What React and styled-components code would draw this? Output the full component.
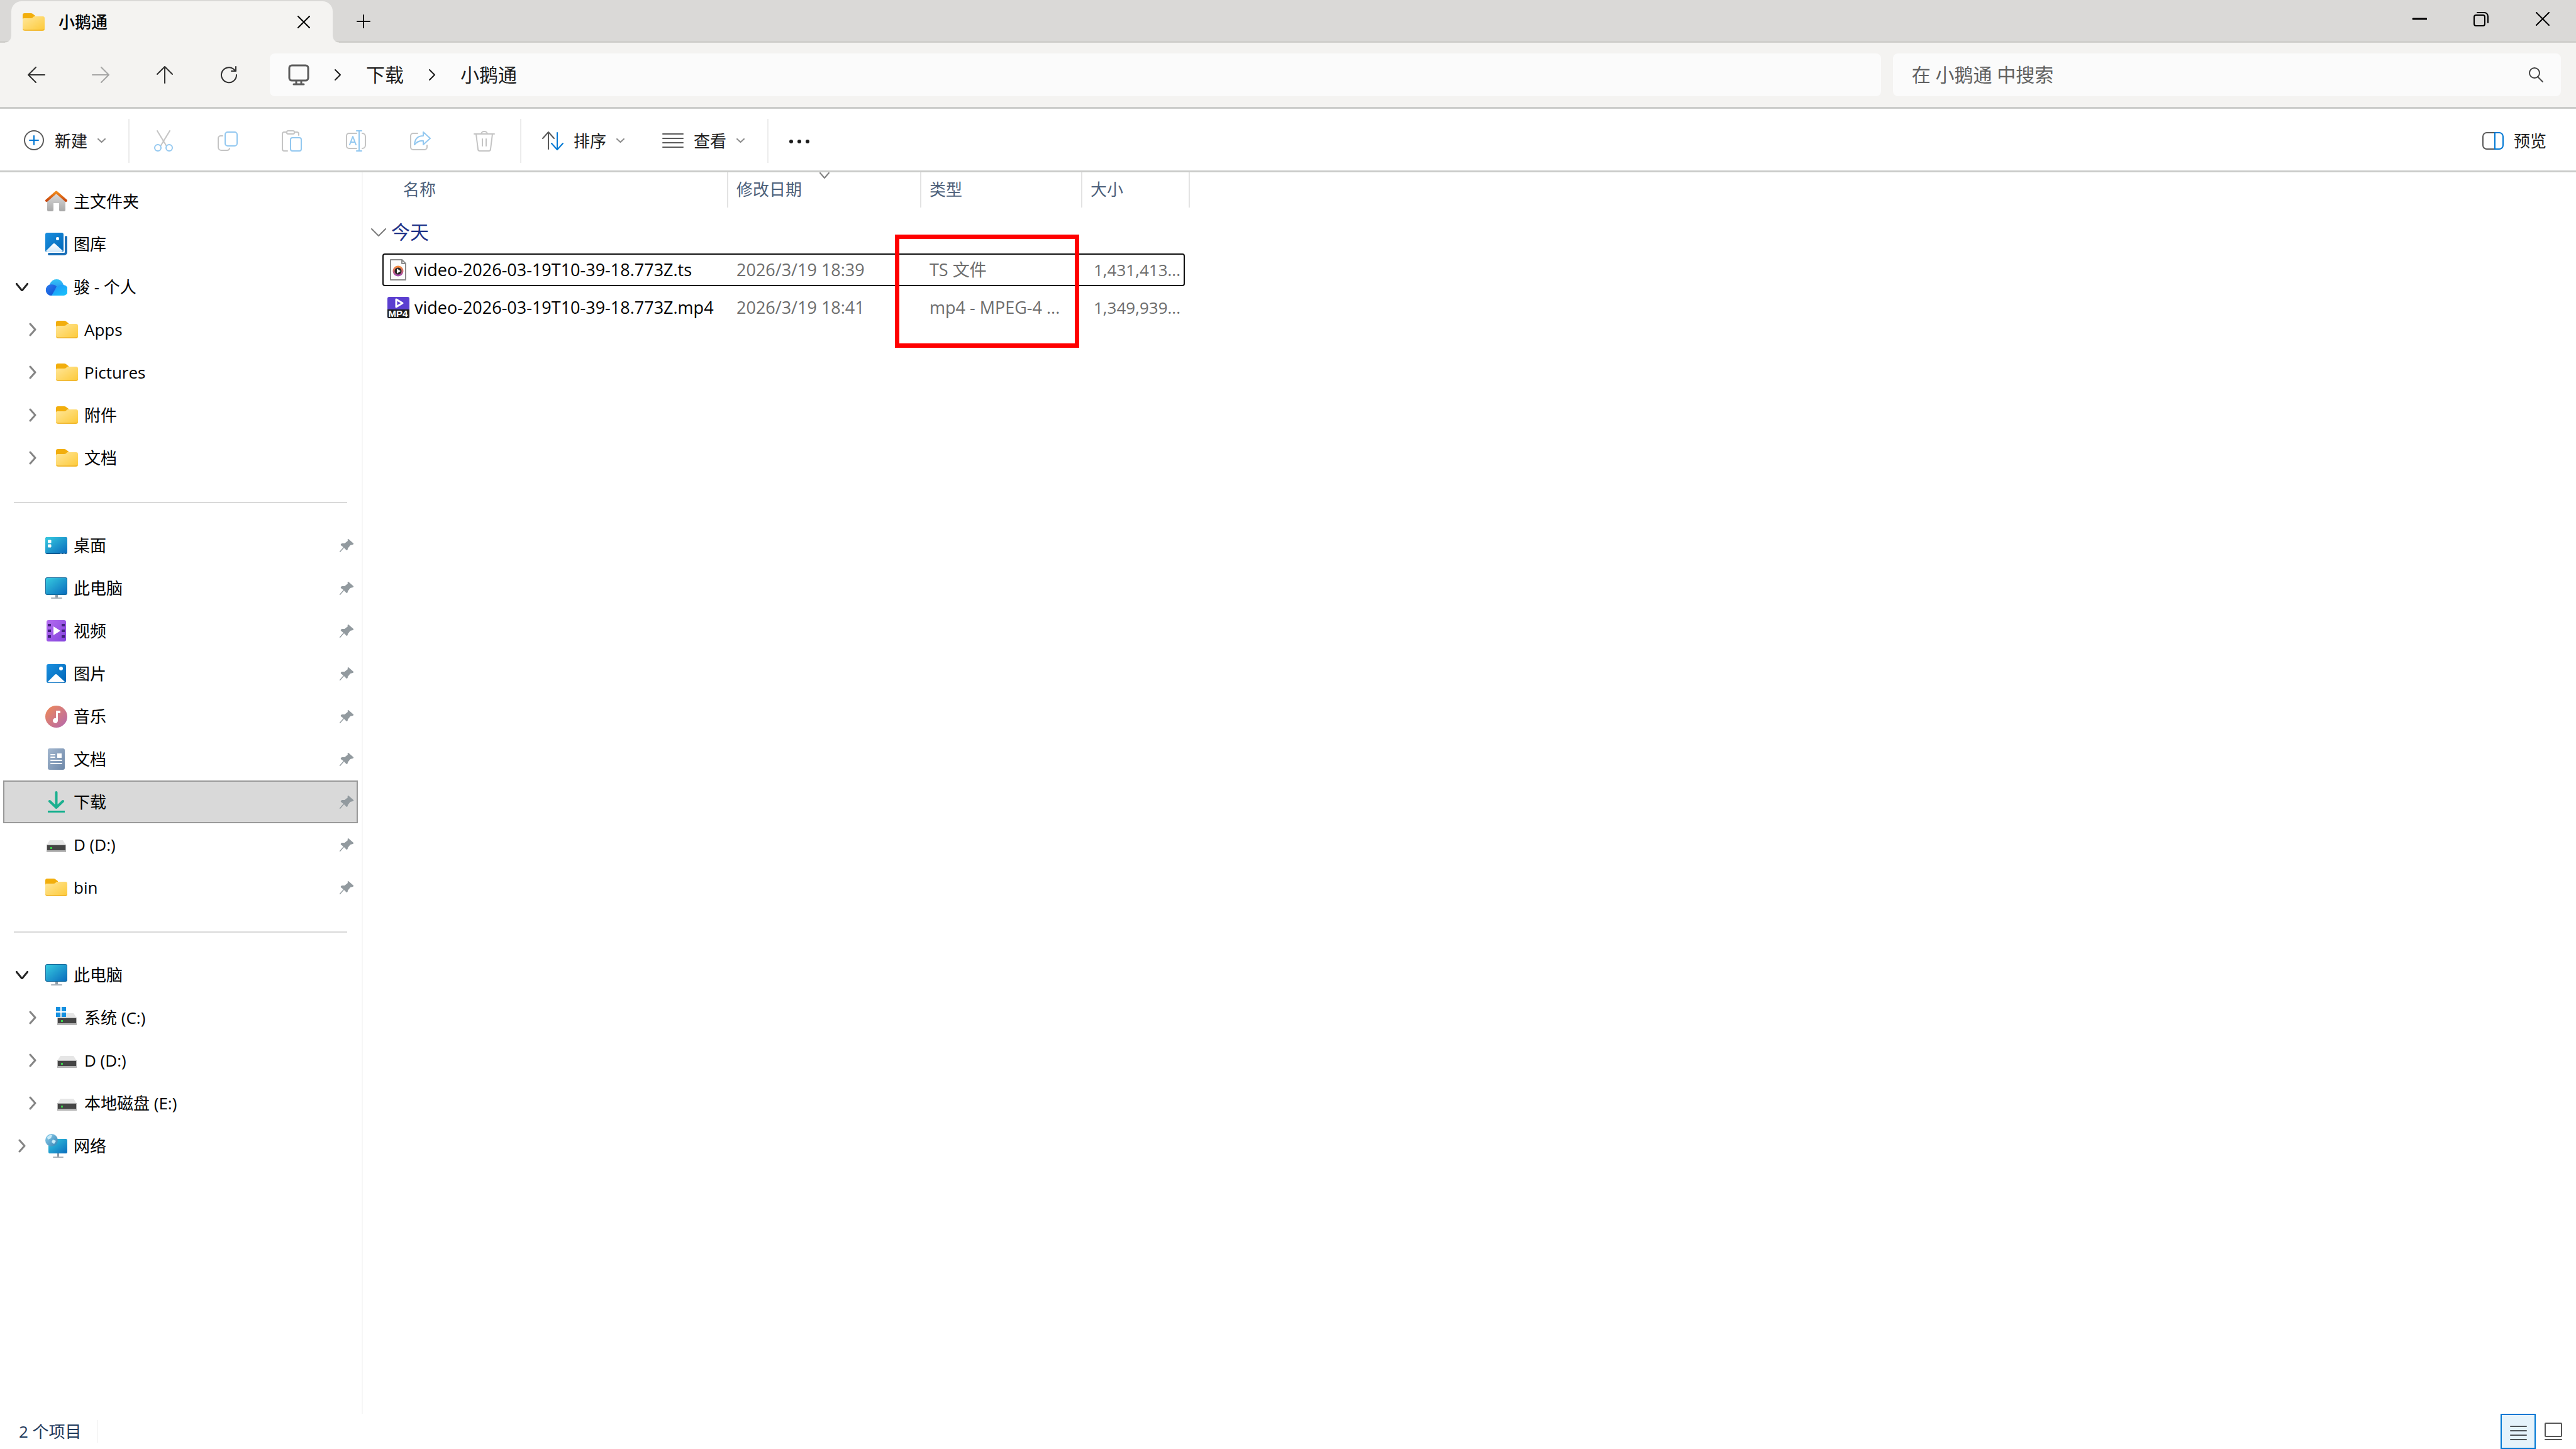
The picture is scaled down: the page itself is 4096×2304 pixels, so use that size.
import React, { useState } from 'react';
import styled, { createGlobalStyle, css } from 'styled-components';

const GlobalStyle = createGlobalStyle`
  * {
    box-sizing: border-box;
  }
  body {
    margin: 0;
    background: #ffffff;
    color: #000000;
    font-family: "Open Sans", "Noto Sans CJK SC", sans-serif;
    font-size: 26px;
    line-height: 36px;
  }
  button, input {
    font: inherit;
    color: inherit;
    border: 0;
    padding: 0;
    background: none;
  }
`;

const Window = styled.div`
  display: flex;
  flex-direction: column;
  min-height: 100vh;
`;

/* title bar */

const TitleBar = styled.header`
  display: flex;
  height: 68px;
  padding: 0 4px 0 18px;
  background: #dad9d7;
  box-shadow: inset 0 -3px 0 #d0cfcc;
`;

const Tab = styled.div`
  position: relative;
  display: flex;
  align-items: center;
  gap: 22px;
  width: 511px;
  padding: 0 36px 0 18px;
  margin-top: 2px;
  border-radius: 16px 16px 0 0;
  background: #f4f3f1;

  &::before, &::after {
    content: "";
    position: absolute;
    bottom: 0;
    width: 10px;
    height: 10px;
  }
  &::before {
    left: -10px;
    background: radial-gradient(circle at 0 0, transparent 9px, #f4f3f1 10px);
  }
  &::after {
    right: -10px;
    background: radial-gradient(circle at 100% 0, transparent 9px, #f4f3f1 10px);
  }
`;

const TabTitle = styled.span`
  flex: 1;
  font-weight: 500;
`;

const PlainButton = styled.button`
  display: flex;
  align-items: center;
  justify-content: center;
`;

const NewTabButton = styled(PlainButton)`
  margin-left: 38px;
`;

const WindowControls = styled.div`
  display: flex;
  margin-left: auto;
`;

const WindowButton = styled(PlainButton)`
  width: 98px;
  height: 60px;
`;

/* navigation bar */

const NavBar = styled.nav`
  display: flex;
  align-items: center;
  height: 105px;
  padding: 0 24px 0 7px;
  background: #f4f3f1;
  border-bottom: 3px solid #cbccca;
`;

const NavButton = styled(PlainButton)`
  width: 102px;
  height: 68px;
  color: ${(props) => (props.disabled ? '#a6a6a5' : '#303030')};
`;

const AddressBar = styled.div`
  display: flex;
  align-items: center;
  flex: 2532 1 0;
  gap: 39px;
  height: 68px;
  margin: 0 19px 0 14px;
  padding-left: 29px;
  border-radius: 8px;
  background: #fbfbfb;
  color: #1b1b1b;
  font-size: 30px;
`;

const Crumb = styled.a`
  color: inherit;
  text-decoration: none;
`;

const SearchBox = styled.label`
  display: flex;
  align-items: center;
  flex: 1004 1 0;
  height: 68px;
  padding: 0 28px 0 30px;
  border-radius: 8px;
  background: #fbfbfb;
  color: #454545;
  font-size: 30px;
`;

const SearchInput = styled.input`
  flex: 1;
  min-width: 0;
  outline: 0;

  &::placeholder {
    color: #606060;
    opacity: 1;
  }
`;

/* command bar */

const CommandBar = styled.div`
  display: flex;
  align-items: center;
  height: 101px;
  padding: 3px 17px 0 7px;
  border-bottom: 3px solid #cbccca;
`;

const CommandButton = styled.button`
  display: flex;
  align-items: center;
  gap: 16px;
  height: 68px;
  padding: 0 30px;
  color: #1b1b1b;
`;

const PreviewButton = styled(CommandButton)`
  margin-left: auto;
`;

const ToolButton = styled(PlainButton)`
  width: 102px;
  height: 68px;
`;

const Divider = styled.span`
  width: 2px;
  height: 70px;
  margin: 0 3px 0 6px;
  background: #ececec;
`;

/* body */

const Body = styled.div`
  display: flex;
  flex: 1;
`;

const Sidebar = styled.aside`
  width: 577px;
  padding: 12px 6px 0 5px;
  border-right: 2px solid #f6f6f6;
`;

const Tree = styled.ul`
  margin: 0;
  padding: 0;
  list-style: none;
`;

const Separator = styled.hr`
  height: 2px;
  margin: 36px 17px 33px;
  border: 0;
  background: #d9d9d9;
`;

const TreeItem = styled.button`
  display: flex;
  align-items: center;
  width: 100%;
  height: 68px;
  padding: 0 4px 0 ${(props) => 18 + props.$level * 17}px;
  border: 2px solid transparent;
  text-align: left;

  ${(props) => props.$selected && css`
    background: #d9d9d9;
    border-color: #999999;
  `}
`;

const Expander = styled.span`
  display: flex;
  justify-content: center;
  width: 20px;
  margin-right: 27px;
`;

const TreeLabel = styled.span`
  flex: 1;
  margin-left: 10px;
`;

const Content = styled.main`
  position: relative;
  flex: 1;
`;

const FileTable = styled.table`
  display: block;
`;

const tableRow = css`
  display: grid;
  grid-template-columns: 550px 307px 256px 171px;
`;

const HeadRow = styled.tr`
  ${tableRow}
  padding-left: 31px;
`;

const HeadCell = styled.th`
  position: relative;
  height: 56px;
  padding: 9px 0 11px ${(props) => (props.$first ? 33 : 13)}px;
  border-right: 2px solid #e3e3e3;
  color: #4c607a;
  font-weight: 400;
  text-align: left;
`;

const SortMark = styled.span`
  position: absolute;
  top: 0;
  left: 0;
  right: 0;
  display: flex;
  justify-content: center;
`;

const GroupCell = styled.td`
  padding: 0;
`;

const GroupButton = styled.button`
  display: flex;
  align-items: center;
  gap: 8px;
  height: 73px;
  padding: 5px 0 0 13px;
  color: #1e3287;
  font-size: 30px;
`;

const FileRow = styled.tr`
  ${tableRow}
  align-items: center;
  width: 1276px;
  height: 52px;
  margin: 0 0 8px 31px;
  border-radius: 4px;
  font-size: 27px;
  outline: ${(props) => (props.$focused ? '2px solid #101010' : 'none')};
  outline-offset: -2px;
`;

const NameCell = styled.td`
  display: flex;
  align-items: center;
  gap: 8px;
  padding: 0 0 0 8px;
`;

const FileCell = styled.td`
  padding: 0 0 0 13px;
  color: #6d6d6d;
  white-space: nowrap;
`;

const SizeCell = styled(FileCell)`
  padding-left: 18px;
  font-size: 26px;
`;

const Highlight = styled.div`
  position: absolute;
  top: 99px;
  left: 846px;
  width: 293px;
  height: 180px;
  border: 7px solid #ff0000;
`;

/* status bar */

const StatusBar = styled.footer`
  display: flex;
  align-items: center;
  height: 56px;
  padding: 0 8px 0 30px;
`;

const StatusText = styled.span`
  padding-right: 24px;
  border-right: 2px solid #f6f6f6;
  color: #1e395b;
`;

const ViewSwitch = styled.div`
  display: flex;
  margin-left: auto;
`;

const ViewButton = styled(PlainButton)`
  width: 56px;
  height: 56px;
  border: 2px solid ${(props) => (props.$active ? '#0078d4' : 'transparent')};
  background: ${(props) => (props.$active ? '#e5f3fb' : 'transparent')};
`;

/* icons */

const Svg = styled.svg`
  display: block;
  flex: none;
  fill: none;
  stroke-linecap: round;
  stroke-linejoin: round;
`;

const Icon = ({ w = 34, h = w, children, ...rest }) => (
  <Svg width={w} height={h} viewBox={`0 0 ${w} ${h}`} aria-hidden="true" {...rest}>
    {children}
  </Svg>
);

const LineIcon = (props) => <Icon stroke="currentColor" strokeWidth="2" {...props} />;

const HiddenSvg = styled.svg`
  position: absolute;
`;

const Gradient = ({ id, from, to, flat }) => (
  <linearGradient id={id} x1="0" y1="0" x2={flat ? 0 : 1} y2="1">
    <stop offset="0" stopColor={from} />
    <stop offset="1" stopColor={to} />
  </linearGradient>
);

const Gradients = () => (
  <HiddenSvg width="0" height="0" aria-hidden="true">
    <defs>
      <Gradient id="folder" from="#ffe79b" to="#fdc937" />
      <Gradient id="roof" from="#f08a1c" to="#c9480f" flat />
      <Gradient id="wall" from="#dedede" to="#a8a8a8" flat />
      <Gradient id="photo" from="#1a8fdf" to="#0067b8" />
      <Gradient id="hill" from="#ffffff" to="#cfe8fa" flat />
      <Gradient id="cloudDark" from="#2f7cf0" to="#0a4fd0" />
      <Gradient id="cloudMid" from="#35c3f5" to="#1a78ee" flat />
      <Gradient id="cloudLight" from="#1e90f8" to="#19c7fb" />
      <Gradient id="screen" from="#36cbe0" to="#0a6cbd" />
      <Gradient id="video" from="#b46cf0" to="#8443dc" />
      <Gradient id="music" from="#f08a55" to="#b368b0" />
      <Gradient id="doc" from="#a3b7cf" to="#6d87a8" />
      <Gradient id="globe" from="#8fd0ee" to="#3583b4" />
      <Gradient id="ring" from="#f58a3c" to="#a44bb0" flat />
    </defs>
  </HiddenSvg>
);

const FolderIcon = () => (
  <Icon w={35} h={28}>
    <path d="M0 3a3 3 0 0 1 3-3h10q2 0 3 1l4 3v8H0z" fill="#f2ae0c" />
    <path d="M0 10q0-2 2-2h11q2 0 3-1l2-2h14a3 3 0 0 1 3 3v17a3 3 0 0 1-3 3H3a3 3 0 0 1-3-3z" fill="url(#folder)" />
    <path d="M1 26q1 1 3 1h27q2 0 3-1" stroke="#e6a41d" strokeWidth="1" />
  </Icon>
);

const HomeIcon = () => (
  <Icon w={35} h={34}>
    <path d="M3 15 17.500 3 32 15v16a2 2 0 0 1-2 2h-6a2 2 0 0 1-2-2V20h-9v11a2 2 0 0 1-2 2H5a2 2 0 0 1-2-2z" fill="url(#wall)" />
    <path d="M2 16 17.500 2.500 33 16" stroke="url(#roof)" strokeWidth="4" />
  </Icon>
);

const GalleryIcon = () => (
  <Icon w={35} h={36}>
    <path d="M6 34h24a3 3 0 0 0 3-3V7" stroke="#1a6fb8" strokeWidth="4" />
    <rect x="-1" y="-1" width="32" height="33" rx="4" fill="#ffffff" />
    <rect width="29" height="31" rx="3" fill="url(#photo)" />
    <path d="M1 29 12 18q2-2 4 0l12 11q-1 2-3 2H3q-1 0-2-2z" fill="url(#hill)" />
    <rect x="17" y="7" width="5" height="5" rx="2" fill="#ffffff" />
  </Icon>
);

const CloudIcon = () => (
  <Icon w={35} h={27}>
    <path d="M9 27A9 9 0 0 1 7 9.500Q10 1 18 1q8 0 11 9L17 27z" fill="url(#cloudMid)" />
    <path d="M9 27A9 9 0 0 1 7 9.500q7-1 11 3L10 27z" fill="url(#cloudDark)" />
    <path d="M10 27 18 15q4-6 11-5a8.500 8.500 0 0 1-2 17z" fill="url(#cloudLight)" />
  </Icon>
);

const DesktopIcon = () => (
  <Icon w={35} h={27}>
    <rect width="35" height="27" rx="3" fill="#0f5c94" />
    <path d="M3 0h29a3 3 0 0 1 3 3v22H0V3a3 3 0 0 1 3-3z" fill="url(#screen)" />
    <path d="M5 5h4v4H5zM5 12h4v4H5z" fill="#ffffff" stroke="#ffffff" />
    <path d="M24 25.500h2m3 0h2" stroke="#ffffff" />
  </Icon>
);

const PcIcon = () => (
  <Icon w={35} h={34}>
    <path d="M16 27h4v5h-4z" fill="#8e9aa5" />
    <path d="M10 33h16" stroke="#aab2ba" strokeWidth="2" />
    <rect width="35" height="28" rx="3" fill="#146a9c" />
    <rect x="1" y="1" width="33" height="26" rx="2" fill="url(#screen)" />
  </Icon>
);

const VideoIcon = () => (
  <Icon w={35} h={34}>
    <rect x="2" width="31" height="34" rx="3" fill="url(#video)" />
    <path d="M4 6h5v4H4zM4 15h5v4H4zM4 24h5v4H4zM26 6h5v4h-5zM26 15h5v4h-5zM26 24h5v4h-5z" fill="#41207c" />
    <path d="M13 10v14l11-7z" fill="#ffffff" />
  </Icon>
);

const PictureIcon = () => (
  <Icon w={35} h={30}>
    <rect x="2" width="31" height="30" rx="3" fill="url(#photo)" />
    <path d="M4 28 15 17q2-2 4 0l12 11q-1 1-3 1H6q-1 0-2-1z" fill="#ffffff" />
    <circle cx="25" cy="7" r="3" fill="#ffffff" />
  </Icon>
);

const MusicIcon = () => (
  <Icon w={35}>
    <circle cx="17.500" cy="17.500" r="17.500" fill="url(#music)" />
    <path d="M17 8h7v4h-4v12a4 4 0 1 1-3-4z" fill="#ffffff" />
  </Icon>
);

const DocIcon = () => (
  <Icon w={35} h={34}>
    <rect x="4" width="27" height="34" rx="3" fill="url(#doc)" />
    <path d="M9 10h6M9 14h6M9 19h17M9 24h17" stroke="#ffffff" strokeWidth="2" />
    <path d="M19 8h7v7h-7z" fill="#ffffff" />
  </Icon>
);

const DownloadIcon = () => (
  <Icon w={35} h={34}>
    <path d="M17.500 2v22M7 16l10.500 10L28 16" stroke="#1cb08f" strokeWidth="4" />
    <path d="M4 31h27v3H4z" fill="#0fae8c" />
  </Icon>
);

const DriveShape = () => (
  <>
    <path d="M7 10h21l5 8H2z" fill="#e6e6e6" />
    <path d="M2 17h31v12H2z" fill="#b4b4b4" />
    <path d="M3 18h29v8H3z" fill="#454545" />
    <rect x="8" y="21" width="3" height="3" fill="#3ad04a" />
  </>
);

const DriveIcon = () => (
  <Icon w={35} h={34}>
    <DriveShape />
  </Icon>
);

const SystemDriveIcon = () => (
  <Icon w={35} h={34}>
    <DriveShape />
    <path d="M0 0h7v7H0zM9 0h7v7H9zM0 9h7v7H0zM9 9h7v7H9z" fill="#1590e0" />
  </Icon>
);

const NetworkIcon = () => (
  <Icon w={35} h={38}>
    <path d="M19 30h3v6h-3z" fill="#8e9aa5" />
    <path d="M13 37h15" stroke="#aab2ba" strokeWidth="2" />
    <rect x="5" y="8" width="30" height="23" rx="2" fill="url(#screen)" />
    <circle cx="10" cy="10" r="10" fill="url(#globe)" />
    <path d="M3 5q5-5 8-3l-2 5-5 2zM12 9l5 2-3 5-4-3z" fill="#c9ebf8" />
  </Icon>
);

const PinIcon = () => (
  <Icon w={23} h={23}>
    <path d="M14 1 22 8q1 1-1 2l-4 1-4 5q0 3-2 3l-4-4-6 7H0v-1l6-7-4-3q-1-2 2-3h4l5-4q-1-3 1-3z" fill="#929a9f" />
  </Icon>
);

const TsFileIcon = () => (
  <Icon w={35} h={34}>
    <path d="M5 1h18l6 6v26H5z" fill="#fbfbfb" stroke="#8b8b8b" strokeWidth="2" />
    <path d="M23 1v6h6" stroke="#8b8b8b" strokeWidth="2" />
    <circle cx="17" cy="19" r="7" fill="#262626" stroke="url(#ring)" strokeWidth="3" />
    <path d="M15 15v8l6-4z" fill="#ffffff" />
  </Icon>
);

const Mp4Label = styled.text`
  fill: #ffffff;
  font: 700 15px "Liberation Sans", sans-serif;
  text-anchor: middle;
`;

const Mp4FileIcon = () => (
  <Icon w={35} h={34}>
    <rect width="35" height="34" rx="3" fill="#5b3fd0" />
    <path d="M0 20h35v11a3 3 0 0 1-3 3H3a3 3 0 0 1-3-3z" fill="#1c1c1c" />
    <path d="M14 4v12l10-6z" stroke="#ffffff" strokeWidth="3" />
    <Mp4Label x="17" y="32">MP4</Mp4Label>
  </Icon>
);

const ChevronDown = ({ w = 13, h = 7, ...rest }) => (
  <LineIcon w={w} h={h} {...rest}>
    <path d={`M1 1 ${w / 2} ${h - 1} ${w - 1} 1`} />
  </LineIcon>
);

const ChevronRight = ({ w = 12, h = 20, ...rest }) => (
  <LineIcon w={w} h={h} {...rest}>
    <path d={`M2 2 ${w - 2} ${h / 2} 2 ${h - 2}`} />
  </LineIcon>
);

const CloseIcon = () => (
  <LineIcon w={22}>
    <path d="M1 1 21 21M21 1 1 21" />
  </LineIcon>
);

const grey = '#c4c4c4';
const blue = '#93c8f0';

const CutIcon = () => (
  <LineIcon>
    <path d="M7 1 21 24M27 1 13 24" stroke={grey} />
    <circle cx="8" cy="28" r="5" stroke={blue} />
    <circle cx="26" cy="28" r="5" stroke={blue} />
  </LineIcon>
);

const CopyIcon = () => (
  <LineIcon>
    <path d="M9 9H6a4 4 0 0 0-4 4v14a5 5 0 0 0 5 5h9a4 4 0 0 0 4-3" stroke={grey} />
    <rect x="13" y="3" width="19" height="22" rx="4" stroke={blue} />
  </LineIcon>
);

const PasteIcon = () => (
  <LineIcon>
    <path d="M10 33H5a3 3 0 0 1-3-3V6a3 3 0 0 1 3-3h4M21 3h4a3 3 0 0 1 3 3v2" stroke={grey} />
    <rect x="9" y="1" width="12" height="5" rx="2" stroke={grey} />
    <rect x="15" y="12" width="17" height="21" rx="3" stroke={blue} />
  </LineIcon>
);

const RenameIcon = () => (
  <LineIcon>
    <path d="M18 5H6a4 4 0 0 0-4 4v16a4 4 0 0 0 4 4h12M27 5a5 5 0 0 1 5 5v14a5 5 0 0 1-5 5" stroke={grey} />
    <path d="M7 23l5-13 5 13M9 19h6M22 1v32M18 1h8M18 33h8" stroke={blue} />
  </LineIcon>
);

const ShareIcon = () => (
  <LineIcon>
    <path d="M13 5H6a4 4 0 0 0-4 4v18a4 4 0 0 0 4 4h18a4 4 0 0 0 4-4v-3" stroke={grey} />
    <path d="M22 3l11 10-11 10v-6q-8-1-14 6 1-14 14-14z" stroke={blue} />
  </LineIcon>
);

const DeleteIcon = () => (
  <LineIcon>
    <path d="M1 6h32M12 6a5 4 0 0 1 10 0M4 6l3 24a3 3 0 0 0 3 3h14a3 3 0 0 0 3-3l3-24M14 14v11M20 14v11" stroke={grey} />
  </LineIcon>
);

const tools = [
  { label: '剪切', icon: CutIcon },
  { label: '复制', icon: CopyIcon },
  { label: '粘贴', icon: PasteIcon },
  { label: '重命名', icon: RenameIcon },
  { label: '共享', icon: ShareIcon },
  { label: '删除', icon: DeleteIcon },
];

const sections = [
  [
    { label: '主文件夹', icon: HomeIcon },
    { label: '图库', icon: GalleryIcon },
    { label: '骏 - 个人', icon: CloudIcon, open: true },
    { label: 'Apps', icon: FolderIcon, level: 1, open: false },
    { label: 'Pictures', icon: FolderIcon, level: 1, open: false },
    { label: '附件', icon: FolderIcon, level: 1, open: false },
    { label: '文档', icon: FolderIcon, level: 1, open: false },
  ],
  [
    { label: '桌面', icon: DesktopIcon, pinned: true },
    { label: '此电脑', icon: PcIcon, pinned: true },
    { label: '视频', icon: VideoIcon, pinned: true },
    { label: '图片', icon: PictureIcon, pinned: true },
    { label: '音乐', icon: MusicIcon, pinned: true },
    { label: '文档', icon: DocIcon, pinned: true },
    { label: '下载', icon: DownloadIcon, pinned: true },
    { label: 'D (D:)', icon: DriveIcon, pinned: true },
    { label: 'bin', icon: FolderIcon, pinned: true },
  ],
  [
    { label: '此电脑', icon: PcIcon, open: true },
    { label: '系统 (C:)', icon: SystemDriveIcon, level: 1, open: false },
    { label: 'D (D:)', icon: DriveIcon, level: 1, open: false },
    { label: '本地磁盘 (E:)', icon: DriveIcon, level: 1, open: false },
    { label: '网络', icon: NetworkIcon, open: false },
  ],
];

const files = [
  { name: 'video-2026-03-19T10-39-18.773Z.ts', icon: TsFileIcon, date: '2026/3/19 18:39', type: 'TS 文件', size: '1,431,413...' },
  { name: 'video-2026-03-19T10-39-18.773Z.mp4', icon: Mp4FileIcon, date: '2026/3/19 18:41', type: 'mp4 - MPEG-4 ...', size: '1,349,939...' },
];

const SidebarItem = ({ item, selected, onSelect }) => {
  const ItemIcon = item.icon;

  return (
    <li>
      <TreeItem type="button" $level={item.level || 0} $selected={selected} onClick={onSelect}>
        <Expander>
          {item.open === true && <ChevronDown w={20} h={13} color="#262626" strokeWidth="3" />}
          {item.open === false && <ChevronRight h={22} color="#858585" strokeWidth="3" />}
        </Expander>
        <ItemIcon />
        <TreeLabel>{item.label}</TreeLabel>
        {item.pinned && <PinIcon />}
      </TreeItem>
    </li>
  );
};

const App = () => {
  const [selected, setSelected] = useState('1-6');
  const [focused, setFocused] = useState(0);
  const [view, setView] = useState('details');

  return (
    <Window>
      <GlobalStyle />
      <Gradients />
      <TitleBar>
        <Tab>
          <FolderIcon />
          <TabTitle>小鹅通</TabTitle>
          <PlainButton type="button" aria-label="关闭标签页">
            <LineIcon w={20}><path d="M1 1 19 19M19 1 1 19" /></LineIcon>
          </PlainButton>
        </Tab>
        <NewTabButton type="button" aria-label="新标签页">
          <LineIcon w={22}><path d="M11 1v20M1 11h20" /></LineIcon>
        </NewTabButton>
        <WindowControls>
          <WindowButton type="button" aria-label="最小化">
            <LineIcon w={24}><path d="M2 12h21" strokeWidth="3" /></LineIcon>
          </WindowButton>
          <WindowButton type="button" aria-label="还原">
            <LineIcon w={24}>
              <rect x="1" y="6" width="17" height="17" rx="3" />
              <path d="M6 2h11a6 6 0 0 1 6 6v10" />
            </LineIcon>
          </WindowButton>
          <WindowButton type="button" aria-label="关闭"><CloseIcon /></WindowButton>
        </WindowControls>
      </TitleBar>

      <NavBar>
        <NavButton type="button" aria-label="后退">
          <LineIcon w={28}><path d="M27 14H1M13 2 1 14l12 12" /></LineIcon>
        </NavButton>
        <NavButton type="button" aria-label="前进" disabled>
          <LineIcon w={28}><path d="M1 14h26M15 2l12 12-12 12" /></LineIcon>
        </NavButton>
        <NavButton type="button" aria-label="向上">
          <LineIcon w={28}><path d="M14 27V1M2 13 14 1l12 12" /></LineIcon>
        </NavButton>
        <NavButton type="button" aria-label="刷新">
          <LineIcon w={28}><path d="M26 14a12 12 0 1 1-5-9.500L25 8M25 1v7h-7" /></LineIcon>
        </NavButton>
        <AddressBar>
          <LineIcon color="#5c5c5c" strokeWidth="3">
            <rect x="2" y="2" width="30" height="24" rx="4" />
            <path d="M13 27v5M21 27v5M9 32h16" />
          </LineIcon>
          <ChevronRight />
          <Crumb href="#downloads">下载</Crumb>
          <ChevronRight />
          <Crumb href="#folder">小鹅通</Crumb>
        </AddressBar>
        <SearchBox>
          <SearchInput type="text" aria-label="搜索" placeholder="在 小鹅通 中搜索" />
          <LineIcon w={24}>
            <circle cx="10" cy="9" r="8" />
            <path d="M15 15l8 8" />
          </LineIcon>
        </SearchBox>
      </NavBar>

      <CommandBar>
        <CommandButton type="button">
          <LineIcon>
            <circle cx="17" cy="16" r="15" stroke="#5a5a5a" />
            <path d="M17 9v14M10 16h14" stroke="#0078d4" />
          </LineIcon>
          新建
          <ChevronDown color="#8a8a8a" />
        </CommandButton>
        <Divider />
        {tools.map(({ label, icon: ToolIcon }) => (
          <ToolButton key={label} type="button" aria-label={label} disabled><ToolIcon /></ToolButton>
        ))}
        <Divider />
        <CommandButton type="button">
          <LineIcon>
            <path d="M10 30V4M1 13l9-10 9 10" stroke="#5a5a5a" />
            <path d="M24 4v26M15 21l9 10 9-10" stroke="#0078d4" />
          </LineIcon>
          排序
          <ChevronDown color="#8a8a8a" />
        </CommandButton>
        <CommandButton type="button">
          <LineIcon><path d="M1 6h32M1 13h32M1 20h32M1 27h32" stroke="#5a5a5a" /></LineIcon>
          查看
          <ChevronDown color="#8a8a8a" />
        </CommandButton>
        <Divider />
        <CommandButton type="button" aria-label="更多">
          <Icon>
            <circle cx="3" cy="18" r="3" fill="#1b1b1b" />
            <circle cx="16" cy="18" r="3" fill="#1b1b1b" />
            <circle cx="29" cy="18" r="3" fill="#1b1b1b" />
          </Icon>
        </CommandButton>
        <PreviewButton type="button">
          <LineIcon>
            <path d="M20 4H7a6 6 0 0 0-6 6v14a6 6 0 0 0 6 6h13" stroke="#5a5a5a" />
            <path d="M20 4h7a6 6 0 0 1 6 6v14a6 6 0 0 1-6 6h-7z" stroke="#0078d4" />
          </LineIcon>
          预览
        </PreviewButton>
      </CommandBar>

      <Body>
        <Sidebar>
          {sections.map((items, s) => (
            <React.Fragment key={s}>
              {s > 0 && <Separator />}
              <Tree>
                {items.map((item, i) => (
                  <SidebarItem
                    key={i}
                    item={item}
                    selected={selected === `${s}-${i}`}
                    onSelect={() => setSelected(`${s}-${i}`)}
                  />
                ))}
              </Tree>
            </React.Fragment>
          ))}
        </Sidebar>
        <Content>
          <FileTable cellSpacing="0">
            <thead>
              <HeadRow>
                <HeadCell $first>名称</HeadCell>
                <HeadCell>
                  修改日期
                  <SortMark><ChevronDown w={16} h={10} color="#808080" /></SortMark>
                </HeadCell>
                <HeadCell>类型</HeadCell>
                <HeadCell>大小</HeadCell>
              </HeadRow>
            </thead>
            <tbody>
              <tr>
                <GroupCell colSpan="4">
                  <GroupButton type="button">
                    <ChevronDown w={24} h={13} color="#7d7d7d" />
                    今天
                  </GroupButton>
                </GroupCell>
              </tr>
              {files.map((file, i) => {
                const FileIcon = file.icon;
                return (
                  <FileRow key={file.name} $focused={focused === i} onClick={() => setFocused(i)}>
                    <NameCell><FileIcon />{file.name}</NameCell>
                    <FileCell>{file.date}</FileCell>
                    <FileCell>{file.type}</FileCell>
                    <SizeCell>{file.size}</SizeCell>
                  </FileRow>
                );
              })}
            </tbody>
          </FileTable>
          <Highlight />
        </Content>
      </Body>

      <StatusBar>
        <StatusText>2 个项目</StatusText>
        <ViewSwitch>
          <ViewButton type="button" aria-label="详细信息" $active={view === 'details'} onClick={() => setView('details')}>
            <LineIcon w={28} color="#4d5357"><path d="M2 6h25M2 13h25M2 20h25M2 27h25" /></LineIcon>
          </ViewButton>
          <ViewButton type="button" aria-label="大图标" $active={view === 'icons'} onClick={() => setView('icons')}>
            <LineIcon w={28} color="#565656">
              <rect x="1" y="1" width="26" height="21" rx="1" />
              <path d="M1 27h26" />
            </LineIcon>
          </ViewButton>
        </ViewSwitch>
      </StatusBar>
    </Window>
  );
};

export default App;
